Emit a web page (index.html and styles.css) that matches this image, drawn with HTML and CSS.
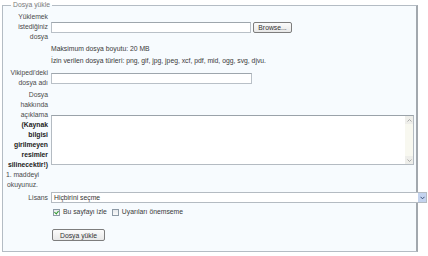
FILE: index.html
```html
<!DOCTYPE html>
<html lang="tr">
<head>
    <meta charset="UTF-8">
    <title>Dosya yükle</title>
    <link rel="stylesheet" href="styles.css">
</head>
<body>

    <fieldset class="upload">
        <legend>Dosya yükle</legend>

        <div class="form">
            <!-- File chooser -->
            <div class="row">
                <label class="row-label" for="fileName">Yüklemek<br>istediğiniz<br>dosya</label>
                <div class="row-field">
                    <input class="text-input file-input" id="fileName" type="text">
                    <button class="button browse" type="button">Browse...</button>
                </div>
            </div>

            <div class="row">
                <div class="row-label"></div>
                <div class="row-field">Maksimum dosya boyutu: 20 MB</div>
            </div>

            <div class="row">
                <div class="row-label"></div>
                <div class="row-field">İzin verilen dosya türleri: png, gif, jpg, jpeg, xcf, pdf, mid, ogg, svg, djvu.</div>
            </div>

            <!-- Destination name -->
            <div class="row">
                <label class="row-label" for="destName">Vikipedi'deki<br>dosya adı</label>
                <div class="row-field">
                    <input class="text-input dest-input" id="destName" type="text">
                </div>
            </div>

            <!-- Description -->
            <div class="row">
                <label class="row-label" for="desc">
                    Dosya<br>hakkında<br>açıklama<br>
                    <b>(Kaynak<br>bilgisi<br>girilmeyen<br>resimler<br>silinecektir!)</b>
                    <span class="policy">1. maddeyi<br>okuyunuz.</span>
                </label>
                <div class="row-field">
                    <div class="textarea-box">
                        <textarea id="desc" class="textarea"></textarea>
                        <div class="scroll">
                            <span class="scroll-btn">
                                <svg width="5" height="3" viewBox="0 0 5 3"><path d="M0.5 2.5 L2.5 0.5 L4.5 2.5" fill="none" stroke="#9a9a9a" stroke-width="0.8"/></svg>
                            </span>
                            <span class="scroll-btn">
                                <svg width="5" height="3" viewBox="0 0 5 3"><path d="M0.5 0.5 L2.5 2.5 L4.5 0.5" fill="none" stroke="#9a9a9a" stroke-width="0.8"/></svg>
                            </span>
                        </div>
                    </div>
                </div>
            </div>

            <!-- License -->
            <div class="row">
                <div class="row-label">Lisans</div>
                <div class="row-field">
                    <div class="select">
                        <span class="select-text">Hiçbirini seçme</span>
                        <span class="select-arrow">
                            <svg width="5" height="4" viewBox="0 0 5 4"><path d="M0.5 0.8 L2.5 2.8 L4.5 0.8" fill="none" stroke="#3b4f78" stroke-width="1"/></svg>
                        </span>
                    </div>
                </div>
            </div>

            <!-- Options -->
            <div class="row row-options">
                <div class="row-label"></div>
                <div class="row-field">
                    <label class="check"><input type="checkbox" checked> Bu sayfayı izle</label>
                    <label class="check"><input type="checkbox"> Uyarıları önemseme</label>
                </div>
            </div>

            <div class="row row-submit">
                <div class="row-label"></div>
                <div class="row-field">
                    <button class="button submit" type="button">Dosya yükle</button>
                </div>
            </div>
        </div>
    </fieldset>

</body>
</html>
```

FILE: styles.css
```css
body {
    margin: 0;
    background: #fff;
    font-family: 'Liberation Sans', Arial, sans-serif;
    font-size: 6.8px;
    line-height: 10px;
    color: #3a3a3a;
}

/* Fieldset box */
.upload {
    margin: 0 10px 0 2px;
    padding: 2px 0 10px 0;
    border: 1px solid #b4bcc4;
    border-right: 2px solid #a2a8ae;
    background: #f7fbfe;
    min-width: 0;
}

.upload legend {
    margin-left: 8px;
    padding: 0 2px;
    line-height: 10px;
    color: #7a7a7a;
}

.form {
    display: flex;
    flex-direction: column;
    gap: 2px;
}

.row {
    display: flex;
    align-items: center;
    gap: 2px;
}

.row-label {
    width: 45px;
    padding-right: 1px;
    flex-shrink: 0;
    text-align: right;
    color: #4a4a4a;
}

.row-label b {
    color: #222;
}

.policy {
    display: block;
    text-align: center;
    padding-right: 6px;
}

.row-field {
    display: flex;
    align-items: center;
    flex: 1;
    min-width: 0;
    white-space: nowrap;
}

/* Inputs */
.text-input {
    box-sizing: border-box;
    height: 11px;
    margin: 0;
    padding: 0;
    border: 1px solid #b9c0c7;
    border-top-color: #9ea6ad;
    background: #fff;
    flex-shrink: 0;
}

.file-input {
    width: 200px;
}

.dest-input {
    width: 201px;
}

.button {
    box-sizing: border-box;
    height: 11px;
    margin: 0;
    padding: 0;
    font-family: inherit;
    font-size: 6.8px;
    line-height: 9px;
    color: #333;
    border: 1px solid #7d7d7d;
    border-radius: 2px;
    background: linear-gradient(#fbfbfb, #e8e8e8);
    flex-shrink: 0;
}

.browse {
    width: 39px;
    margin-left: 2px;
}

/* Textarea with its scrollbar */
.textarea-box {
    display: flex;
    flex-shrink: 0;
    box-sizing: border-box;
    width: 363px;
    height: 50px;
    border: 1px solid #b4bbc2;
    border-top-color: #9aa2a9;
    background: #fff;
}

.textarea {
    flex: 1;
    margin: 0;
    padding: 0;
    border: none;
    resize: none;
    outline: none;
    background: transparent;
}

.scroll {
    width: 8px;
    display: flex;
    flex-direction: column;
    justify-content: space-between;
    background: #f8f8f0;
}

.scroll-btn {
    height: 8px;
    display: flex;
    align-items: center;
    justify-content: center;
    background: #eeeeea;
}

/* License select, wider than the box it sits in */
.select {
    display: flex;
    flex-shrink: 0;
    box-sizing: border-box;
    width: 376px;
    height: 11px;
    border: 1px solid #b4bbc2;
    background: #fff;
    color: #333;
}

.select-text {
    flex: 1;
    padding-left: 2px;
    line-height: 9px;
}

.select-arrow {
    width: 8px;
    display: flex;
    align-items: center;
    justify-content: center;
    background: #c4d3ee;
}

/* Options */
.row-options {
    margin-top: 2px;
}

.check {
    display: flex;
    align-items: center;
    margin-right: 3px;
}

.check input {
    appearance: none;
    box-sizing: border-box;
    width: 7px;
    height: 7px;
    margin: 0 3px 0 2px;
    border: 1px solid #8d9aa6;
    background: linear-gradient(#e6e9ec, #fafafa);
    position: relative;
}

.check input:checked::after {
    content: "";
    position: absolute;
    left: 1px;
    top: 0;
    width: 2px;
    height: 3px;
    border: solid #2e9a2e;
    border-width: 0 1px 1px 0;
    transform: rotate(40deg);
}

.row-submit {
    margin-top: 10px;
}

.submit {
    width: 53px;
    height: 12px;
    margin-left: 1px;
}
```
